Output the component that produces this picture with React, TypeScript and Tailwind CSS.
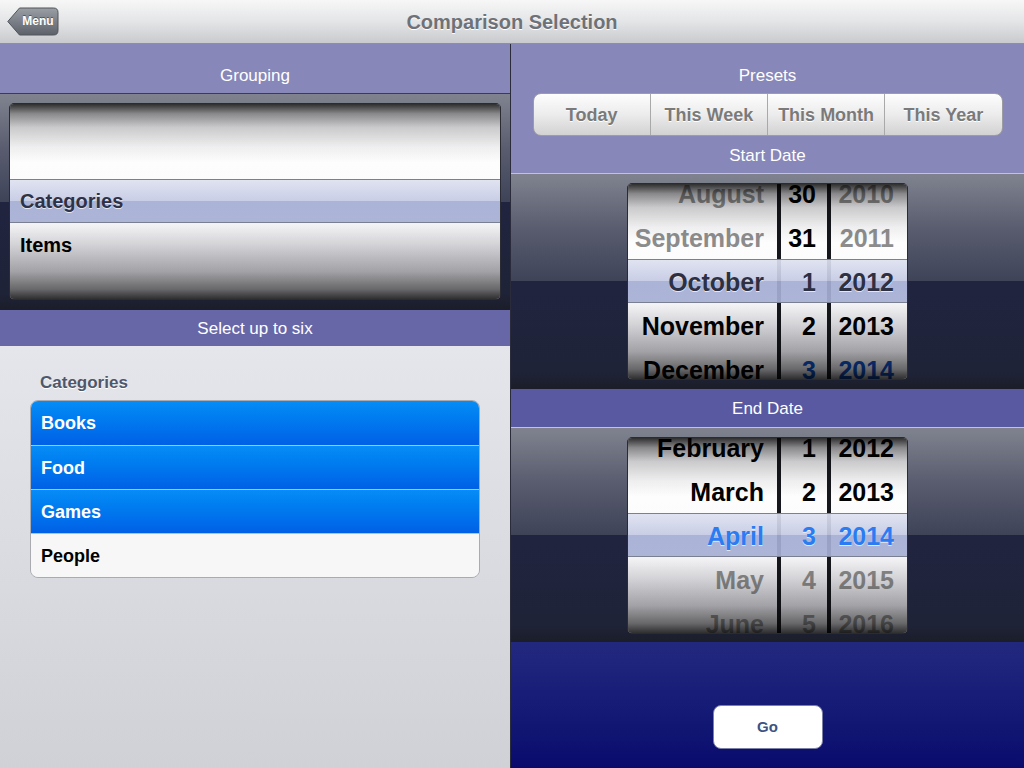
import React from "react";

type Cell = { text: string; color: string; shadow?: boolean };

type Column = {
    width: string;
    align: "left" | "right";
    pad: string;
    cells: Cell[];
};

const shade =
    "bg-[linear-gradient(to_bottom,rgba(0,0,0,0.8)_0%,rgba(0,0,0,0.42)_5%,rgba(0,0,0,0.16)_12%,rgba(0,0,0,0.04)_22%,rgba(0,0,0,0)_30%,rgba(0,0,0,0)_62%,rgba(0,0,0,0.1)_72%,rgba(0,0,0,0.28)_86%,rgba(0,0,0,0.52)_95%,rgba(0,0,0,0.78)_100%)]";

const MenuButton = () => (
    <button className="relative w-[52px] h-[29px] ml-[7px] mt-[7px]">
        <svg className="absolute inset-0" width="52" height="29" viewBox="0 0 52 29">
            <defs>
                <linearGradient id="menuGrad" x1="0" y1="0" x2="0" y2="1">
                    <stop offset="0" stopColor="#9a9ea5" />
                    <stop offset="0.5" stopColor="#7b8088" />
                    <stop offset="1" stopColor="#5d626a" />
                </linearGradient>
            </defs>
            <path
                d="M0.8 14.5 L12.5 1 L46.5 1 Q51 1 51 5.5 L51 23.5 Q51 28 46.5 28 L12.5 28 Z"
                fill="url(#menuGrad)"
                stroke="#50545b"
                strokeWidth="1"
            />
        </svg>
        <span className="relative block pl-[10px] text-[12px] font-bold text-white leading-[29px] [text-shadow:0_-1px_0_rgba(0,0,0,0.4)]">
            Menu
        </span>
    </button>
);

const Wheel = ({ columns, offset }: { columns: Column[]; offset: string }) => (
    <div className="relative h-[197px] rounded-[5px] border border-[#2a2b33] bg-[#16171c] flex gap-[4px] overflow-hidden">
        {columns.map((col, ci) => (
            <div
                key={ci}
                className={`${col.width} h-full overflow-hidden bg-[linear-gradient(to_bottom,#e9e9ee_0%,#fdfdfd_30%,#fbfbfb_50%,#e9e9ee_75%,#d6d6dc_100%)]`}
            >
                <div className={offset}>
                    {col.cells.map((cell, i) => (
                        <div
                            key={i}
                            className={`relative z-20 h-[44px] leading-[44px] font-bold ${col.pad} ${
                                col.align === "right" ? "text-right" : "text-left"
                            } ${cell.shadow ? "[text-shadow:0_1px_0_rgba(255,255,255,0.7)]" : ""}`}
                            style={{ color: cell.color }}
                        >
                            {cell.text}
                        </div>
                    ))}
                </div>
            </div>
        ))}
        {/* selection bar */}
        <div className="absolute left-0 right-0 top-[75px] h-[44px] z-10 border-y border-[#7b7f92] bg-[linear-gradient(to_bottom,rgba(222,225,240,0.92)_0%,rgba(196,202,228,0.92)_50%,rgba(164,174,212,0.92)_50%,rgba(166,175,212,0.92)_100%)]" />
        {/* wheel shading */}
        <div className={`absolute inset-0 z-30 pointer-events-none ${shade}`} />
    </div>
);

const PickerFrame = ({ children, height, light }: { children: React.ReactNode; height: string; light?: boolean }) => (
    <div
        className={`${height} border-t ${
            light ? "border-[#c3c4cf]" : "border-[#3b3c52]"
        } bg-[linear-gradient(to_bottom,#80838f_0%,#5a5d6f_25%,#3f4358_50%,#20243f_50%,#1f2338_92%,#1b1d28_100%)] pt-[9px]`}
    >
        {children}
    </div>
);

const cell = (text: string, color: string, shadow?: boolean): Cell => ({ text, color, shadow });

const startColumns: Column[] = [
    {
        width: "w-[149px]",
        align: "right",
        pad: "pr-[13px] text-[25px]",
        cells: [
            cell("August", "#8a8a8a"),
            cell("September", "#8c8c8c"),
            cell("October", "#2d3043", true),
            cell("November", "#000000"),
            cell("December", "#000000"),
        ],
    },
    {
        width: "w-[46px]",
        align: "right",
        pad: "pr-[11px] text-[25px]",
        cells: [
            cell("30", "#000000"),
            cell("31", "#000000"),
            cell("1", "#2d3043", true),
            cell("2", "#000000"),
            cell("3", "#0c47b0"),
        ],
    },
    {
        width: "w-[76px]",
        align: "right",
        pad: "pr-[13px] text-[25px]",
        cells: [
            cell("2010", "#8a8a8a"),
            cell("2011", "#8c8c8c"),
            cell("2012", "#2d3043", true),
            cell("2013", "#000000"),
            cell("2014", "#0c47b0"),
        ],
    },
];

const endColumns: Column[] = [
    {
        width: "w-[149px]",
        align: "right",
        pad: "pr-[13px] text-[25px]",
        cells: [
            cell("February", "#000000"),
            cell("March", "#000000"),
            cell("April", "#2b7cf2", true),
            cell("May", "#8a8a8a"),
            cell("June", "#8a8a8a"),
        ],
    },
    {
        width: "w-[46px]",
        align: "right",
        pad: "pr-[11px] text-[25px]",
        cells: [
            cell("1", "#000000"),
            cell("2", "#000000"),
            cell("3", "#2b7cf2", true),
            cell("4", "#8a8a8a"),
            cell("5", "#8a8a8a"),
        ],
    },
    {
        width: "w-[76px]",
        align: "right",
        pad: "pr-[13px] text-[25px]",
        cells: [
            cell("2012", "#000000"),
            cell("2013", "#000000"),
            cell("2014", "#2b7cf2", true),
            cell("2015", "#8a8a8a"),
            cell("2016", "#8a8a8a"),
        ],
    },
];

const groupingColumns: Column[] = [
    {
        width: "flex-1",
        align: "left",
        pad: "pl-[10px] text-[20px]",
        cells: [
            cell("", "#000"),
            cell("", "#000"),
            cell("Categories", "#2e3246", true),
            cell("Items", "#000000"),
            cell("", "#000"),
        ],
    },
];

const categories = [
    { name: "Books", selected: true },
    { name: "Food", selected: true },
    { name: "Games", selected: true },
    { name: "People", selected: false },
];

const presets = ["Today", "This Week", "This Month", "This Year"];

export default function App() {
    return (
        <div className="w-[1024px] h-[768px] flex flex-col overflow-hidden font-['Liberation_Sans',Arial,sans-serif]">
            {/* nav bar */}
            <header className="relative h-[44px] shrink-0 border-b border-[#8d9096] bg-linear-to-b from-[#f7f7f7] via-[#e4e5e7] to-[#c9cacd] flex">
                <MenuButton />
                <h1 className="absolute inset-x-0 top-0 h-[44px] leading-[44px] text-center text-[20px] font-bold text-[#6e7278] [text-shadow:0_1px_0_#ffffff] pointer-events-none">
                    Comparison Selection
                </h1>
            </header>

            <div className="flex flex-1">
                {/* left pane */}
                <section className="w-[511px] flex flex-col border-r border-[#2a2c3c]">
                    <div className="h-[49px] bg-[#8787b9] pt-[22px] text-center text-[17px] leading-[20px] text-white">
                        Grouping
                    </div>
                    <PickerFrame height="h-[217px]">
                        <div className="px-[9px]">
                            <Wheel columns={groupingColumns} offset="-mt-[13px]" />
                        </div>
                    </PickerFrame>
                    <div className="h-[36px] bg-[#6767a8] pt-[9px] text-center text-[17px] leading-[20px] text-white">
                        Select up to six
                    </div>
                    <div className="flex-1 bg-linear-to-b from-[#e4e6eb] to-[#cfd1d6] px-[30px] pt-[27px]">
                        <h2 className="pl-[10px] text-[17px] font-bold text-[#4e576b] leading-[20px] [text-shadow:0_1px_0_#ffffff]">
                            Categories
                        </h2>
                        <div className="mt-[7px] rounded-[8px] border border-[#a9abb1] overflow-hidden">
                            {categories.map((c, i) => (
                                <div
                                    key={c.name}
                                    className={`h-[44px] leading-[44px] pl-[10px] text-[18px] font-bold ${
                                        i > 0 ? "border-t border-[#b9bfcc]" : ""
                                    } ${
                                        c.selected
                                            ? "bg-linear-to-b from-[#078df6] to-[#0160e6] text-white"
                                            : "bg-[#f7f7f7] text-black"
                                    }`}
                                >
                                    {c.name}
                                </div>
                            ))}
                        </div>
                    </div>
                </section>

                {/* right pane */}
                <section className="flex-1 flex flex-col">
                    <div className="h-[129px] bg-[#8787b9] pt-[22px] flex flex-col items-center">
                        <div className="text-[17px] leading-[20px] text-white">Presets</div>
                        <div className="mt-[7px] w-[470px] h-[43px] flex rounded-[8px] border border-[#9c9ca3] overflow-hidden bg-linear-to-b from-[#fdfdfd] via-[#ececec] to-[#d2d2d2]">
                            {presets.map((p, i) => (
                                <button
                                    key={p}
                                    className={`flex-1 pt-[1px] text-[18px] font-bold text-[#7a7a7a] [text-shadow:0_1px_0_#ffffff] ${
                                        i > 0 ? "border-l border-[#a9a9a9]" : ""
                                    }`}
                                >
                                    {p}
                                </button>
                            ))}
                        </div>
                        <div className="mt-[10px] text-[17px] leading-[20px] text-white">Start Date</div>
                    </div>
                    <PickerFrame height="h-[216px]" light>
                        <div className="w-[281px] ml-[116px]">
                            <Wheel columns={startColumns} offset="-mt-[12px]" />
                        </div>
                    </PickerFrame>
                    <div className="h-[38px] bg-[#5859a0] pt-[10px] text-center text-[17px] leading-[20px] text-white">
                        End Date
                    </div>
                    <PickerFrame height="h-[215px]" light>
                        <div className="w-[281px] ml-[116px]">
                            <Wheel columns={endColumns} offset="-mt-[12px]" />
                        </div>
                    </PickerFrame>
                    <div className="flex-1 bg-linear-to-b from-[#23287f] to-[#0a0a6d] flex justify-center pt-[63px]">
                        <button className="w-[110px] h-[44px] rounded-[8px] border border-[#7c7fa6] bg-white text-[15px] font-bold text-[#3c5385]">
                            Go
                        </button>
                    </div>
                </section>
            </div>
        </div>
    );
}
